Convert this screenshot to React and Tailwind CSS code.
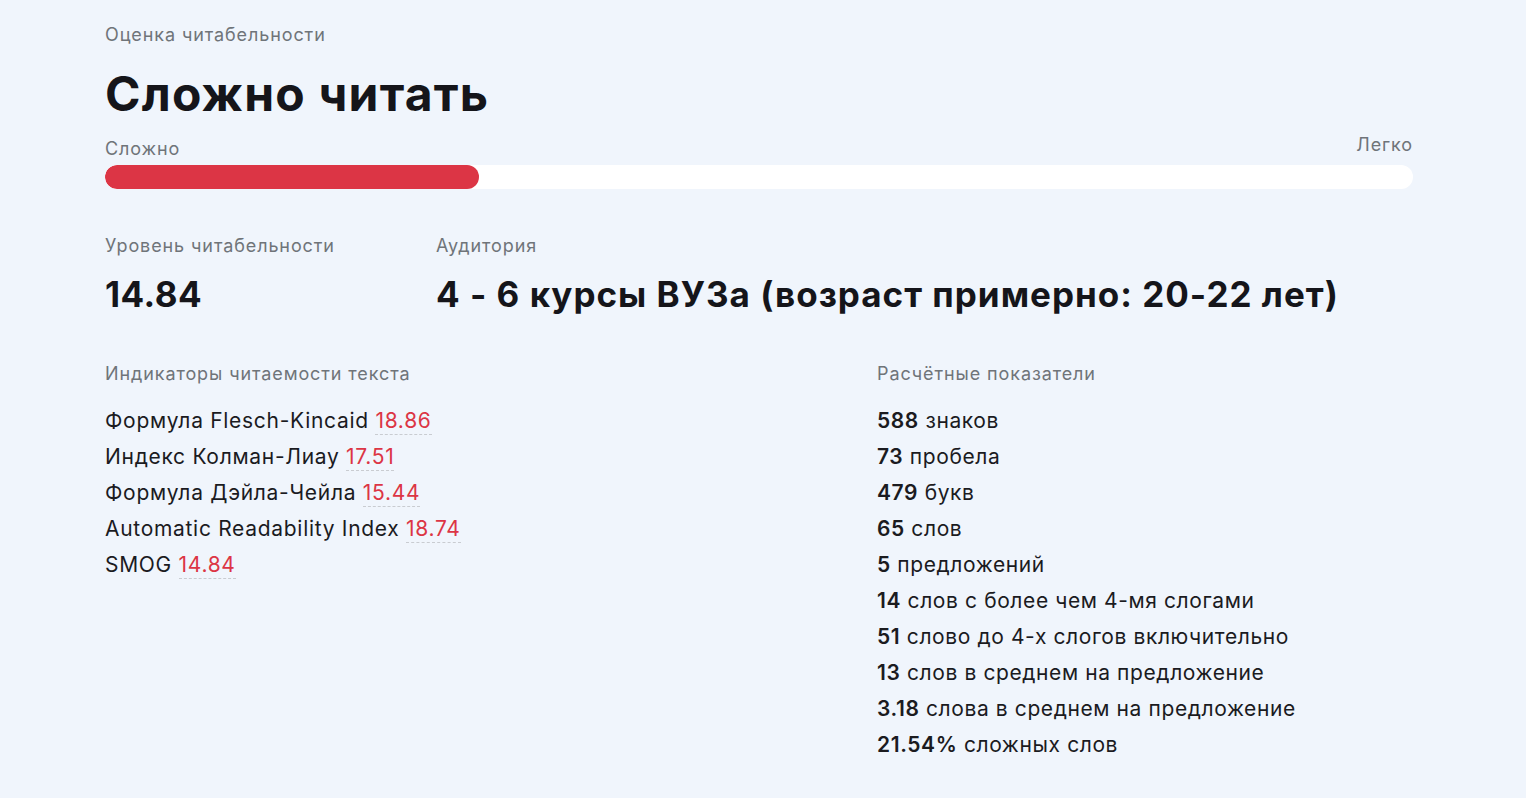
import React from "react";

const indicators = [
  { label: "Формула Flesch-Kincaid", value: "18.86" },
  { label: "Индекс Колман-Лиау", value: "17.51" },
  { label: "Формула Дэйла-Чейла", value: "15.44" },
  { label: "Automatic Readability Index", value: "18.74" },
  { label: "SMOG", value: "14.84" },
];

const metrics = [
  ["588", "знаков"],
  ["73", "пробела"],
  ["479", "букв"],
  ["65", "слов"],
  ["5", "предложений"],
  ["14", "слов с более чем 4-мя слогами"],
  ["51", "слово до 4-х слогов включительно"],
  ["13", "слов в среднем на предложение"],
  ["3.18", "слова в среднем на предложение"],
  ["21.54%", "сложных слов"],
];

const body = "font-['Inter','Noto_Sans',sans-serif]";
const label = "text-[18px] leading-[24px] tracking-[0.9px] text-[#6f7479]";

export default function App() {
  const score = 28.6; // percent of scale filled

  return (
    <div className={`min-h-[798px] bg-[#f0f5fc] ${body} text-[#1b1b1f]`}>
      <div className="w-[1308px] ml-[105px] pt-[23px]">
        <div className={label}>Оценка читабельности</div>
        <h1 className="mt-[20px] text-[48px] leading-[54px] font-bold tracking-[1.2px] text-[#15151a]">
          Сложно читать
        </h1>

        {/* scale */}
        <div className="mt-[16px] flex items-end justify-between text-[18px] leading-[24px] tracking-[0.9px] text-[#6f7479]">
          <span>Сложно</span>
          <span className="relative -top-[4px]">Легко</span>
        </div>
        <div className="mt-[4px] h-[24px] w-full rounded-full bg-white overflow-hidden">
          <div className="h-full rounded-full bg-[#dc3545]" style={{ width: `${score}%` }} />
        </div>

        {/* level + audience */}
        <div className="mt-[45px] flex">
          <div className="w-[331px]">
            <div className={label}>Уровень читабельности</div>
            <div className="mt-[15px] text-[35px] leading-[42px] font-bold tracking-[0.5px] text-[#15151a]">14.84</div>
          </div>
          <div>
            <div className={label}>Аудитория</div>
            <div className="mt-[15px] text-[35px] leading-[42px] font-bold tracking-[1px] text-[#15151a]">
              4 - 6 курсы ВУЗа (возраст примерно: 20-22 лет)
            </div>
          </div>
        </div>

        {/* indicators + metrics */}
        <div className="mt-[47px] flex">
          <div className="w-[772px]">
            <div className={label}>Индикаторы читаемости текста</div>
            <ul className="mt-[17px] flex flex-col">
              {indicators.map((it) => (
                <li key={it.label} className="text-[21px] leading-[36px] tracking-[0.7px]">
                  {it.label}{" "}
                  <span className="text-[#dc3545] border-b border-dashed border-[#c9ccd1] pb-[1px]">
                    {it.value}
                  </span>
                </li>
              ))}
            </ul>
          </div>
          <div>
            <div className={label}>Расчётные показатели</div>
            <ul className="mt-[17px] flex flex-col">
              {metrics.map(([n, t]) => (
                <li key={t + n} className="text-[21px] leading-[36px] tracking-[0.6px]">
                  <span className="font-semibold">{n}</span> {t}
                </li>
              ))}
            </ul>
          </div>
        </div>
      </div>
    </div>
  );
}
